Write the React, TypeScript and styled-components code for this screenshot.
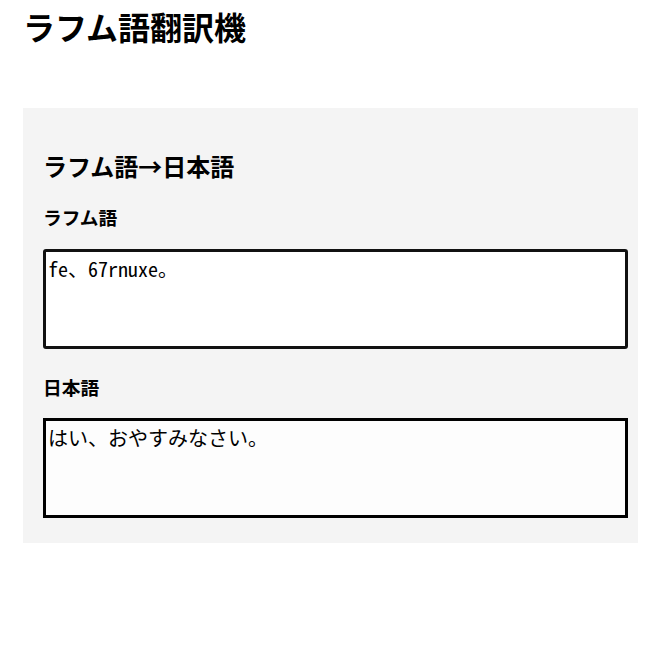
import React, { useEffect, useRef } from "react";
import styled, { createGlobalStyle } from "styled-components";

const GlobalStyle = createGlobalStyle`
  html, body {
    margin: 0;
    padding: 0;
    background: #ffffff;
    color: #000000;
    font-family: "Noto Sans CJK JP", "Noto Sans", sans-serif;
  }
`;

const Page = styled.div`
  padding: 3px 31px 0 23px;
  width: 615px;
`;

const Title = styled.h1`
  margin: 0 0 59px;
  font-size: 32px;
  font-weight: 700;
  line-height: normal;
`;

const Panel = styled.section`
  background: #f4f4f4;
  padding: 20px 20px 20px;
`;

const PanelTitle = styled.h2`
  margin: 20px 0 20px;
  font-size: 24px;
  font-weight: 700;
  line-height: normal;
`;

const FieldLabel = styled.label<{ $spaced?: boolean }>`
  display: block;
  margin: ${(p) => (p.$spaced ? "24px 0 18px" : "0 0 19px")};
  font-size: 18.72px;
  font-weight: 700;
  line-height: normal;
`;

const TextBox = styled.textarea<{ $mono?: boolean; $active?: boolean }>`
  display: block;
  box-sizing: content-box;
  width: 100%;
  height: 90px;
  margin: 0 0 5px;
  padding: 2px;
  border: 3px solid ${(p) => (p.$active ? "#111111" : "#000000")};
  border-radius: ${(p) => (p.$active ? "3px" : "0")};
  background: ${(p) => (p.$active ? "#ffffff" : "#fdfdfd")};
  color: #000000;
  font-family: ${(p) =>
    p.$mono
      ? `"Noto Sans Mono CJK JP", "Noto Sans CJK JP", monospace`
      : `"Noto Sans CJK JP", sans-serif`};
  font-size: 20px;
  line-height: normal;
  resize: none;
  outline: none;
  overflow: hidden;
`;

export default function App() {
  const ref = useRef<HTMLTextAreaElement>(null);
  const source = "fe、67rnuxe。\n";

  useEffect(() => {
    const el = ref.current;
    if (el) {
      el.focus();
      el.setSelectionRange(source.length, source.length);
    }
  }, []);

  return (
    <>
      <GlobalStyle />
      <Page>
        <Title>ラフム語翻訳機</Title>
        <Panel>
          <PanelTitle>ラフム語→日本語</PanelTitle>
          <FieldLabel htmlFor="src">ラフム語</FieldLabel>
          <TextBox id="src" ref={ref} $mono $active defaultValue={source} />
          <FieldLabel htmlFor="dst" $spaced>
            日本語
          </FieldLabel>
          <TextBox id="dst" readOnly value="はい、おやすみなさい。" />
        </Panel>
      </Page>
    </>
  );
}
